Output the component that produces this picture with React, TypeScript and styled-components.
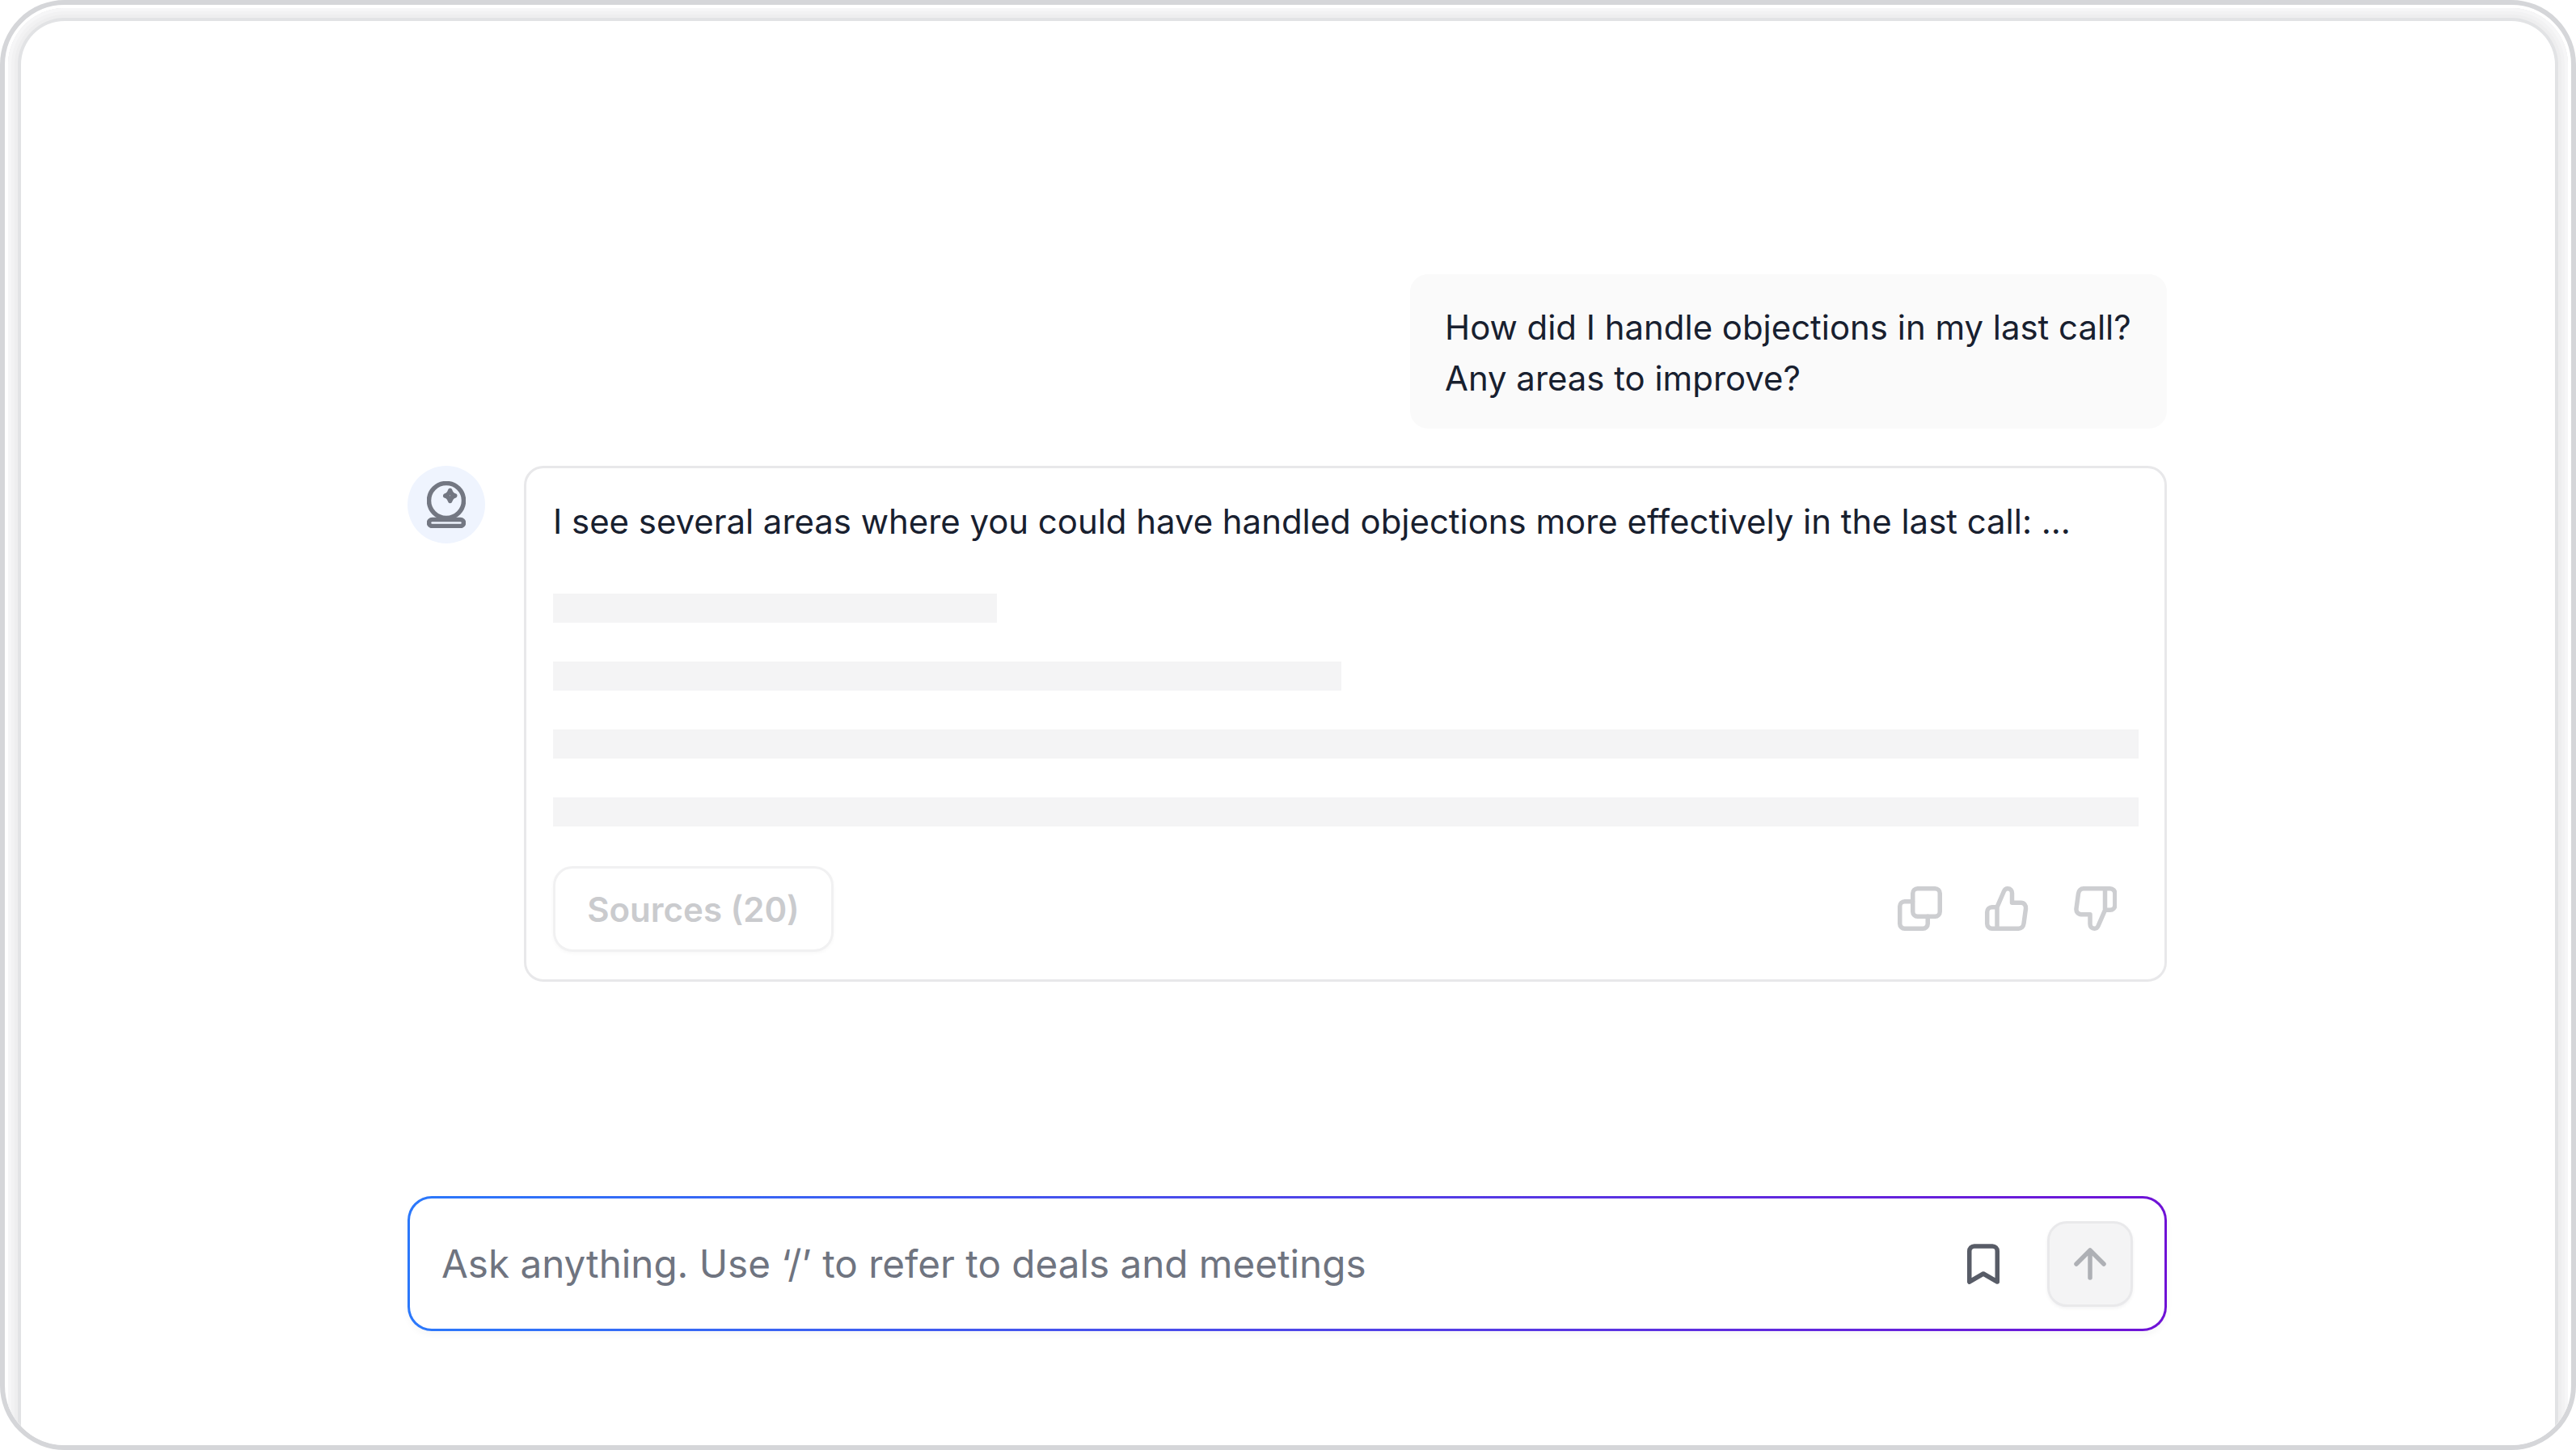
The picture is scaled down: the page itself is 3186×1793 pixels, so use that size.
import React from 'react';
import styled, { createGlobalStyle } from 'styled-components';

const GlobalStyle = createGlobalStyle`
  html, body {
    margin: 0;
    padding: 0;
    background: #fff;
  }

  body {
    font-family: Inter, 'Liberation Sans', sans-serif;
  }
`;

const Frame = styled.div`
  box-sizing: border-box;
  width: 3186px;
  height: 1793px;
  border: 6px solid #d5d6d9;
  border-radius: 80px;
  padding: 4px 4px 0;
  overflow: hidden;
  background: #fff;
`;

/* runs 60px past the bottom of the frame so the bezel has no bottom edge */
const Screen = styled.main`
  box-sizing: border-box;
  height: calc(100% + 60px);
  border-radius: 70px;
  padding: 329px 496px 201px 494px;
  display: flex;
  flex-direction: column;
  background: #fff;
  box-shadow: inset 0 0 0 4px #f6f6f7, inset 0 0 0 8px #f2f2f3, inset 0 0 0 12px #eeeeef,
    inset 0 0 0 16px #e2e3e5;
`;

const UserBubble = styled.div`
  align-self: flex-end;
  box-sizing: border-box;
  width: 936px;
  height: 191px;
  padding: 34px 43px;
  background: #fafafa;
  border-radius: 22px;
  font-size: 41.9px;
  line-height: 63px;
  color: #18202f;
  white-space: nowrap;
`;

const AnswerRow = styled.section`
  display: flex;
  align-items: flex-start;
  gap: 48px;
  margin-top: 46px;
`;

const Avatar = styled.div`
  flex: none;
  width: 96px;
  height: 96px;
  border-radius: 50%;
  background: #eff4fe;
  display: flex;
  align-items: center;
  justify-content: center;
`;

const AnswerCard = styled.article`
  box-sizing: border-box;
  flex: 1;
  height: 638px;
  border: 3px solid #e8e8ea;
  border-radius: 24px;
  padding: 35px 32px 0 33px;
`;

const AnswerText = styled.p`
  margin: 0;
  font-size: 41.9px;
  line-height: 62px;
  color: #18202f;
  white-space: nowrap;
`;

const Skeletons = styled.div`
  display: flex;
  flex-direction: column;
  gap: 48px;
  margin-top: 58px;
`;

const Skeleton = styled.div<{ $width: string }>`
  height: 36px;
  width: ${(p) => p.$width};
  background: #f4f4f5;
`;

const CardFooter = styled.div`
  display: flex;
  align-items: center;
  justify-content: space-between;
  margin-top: 49px;
`;

const SourcesButton = styled.button`
  box-sizing: border-box;
  width: 347px;
  height: 106px;
  border: 3px solid #f1f1f2;
  border-radius: 24px;
  background: #fff;
  box-shadow: 0 2px 4px rgba(16, 24, 40, 0.03);
  font-family: inherit;
  font-size: 42px;
  font-weight: 600;
  color: #cacbce;
  padding: 0;
`;

const CardActions = styled.div`
  display: flex;
  gap: 52px;
  margin-right: 27px;
`;

const Spacer = styled.div`
  flex: 1;
`;

const InputBar = styled.div`
  box-sizing: border-box;
  flex: none;
  height: 167px;
  border: 3px solid transparent;
  border-radius: 30px;
  background: linear-gradient(#fff, #fff) padding-box,
    linear-gradient(90deg, #2b78fb, #6f12d6) border-box;
  box-shadow: 0 4px 8px rgba(16, 24, 40, 0.04);
  display: flex;
  align-items: center;
  padding: 0 39px;
`;

const Placeholder = styled.span`
  flex: 1;
  font-size: 47.6px;
  color: #6f7480;
`;

const SendButton = styled.button`
  box-sizing: border-box;
  width: 106px;
  height: 106px;
  margin-left: 59px;
  border: 3px solid #e9e9eb;
  border-radius: 24px;
  background: #f4f4f5;
  box-shadow: 0 2px 4px rgba(16, 24, 40, 0.05);
  display: flex;
  align-items: center;
  justify-content: center;
  padding: 0;
`;

const IconSvg = styled.svg`
  display: block;
  flex: none;
  fill: none;
  stroke-width: 5.5;
  stroke-linecap: round;
  stroke-linejoin: round;
`;

const ActionIcon = styled(IconSvg).attrs({ width: 56, height: 56, viewBox: '0 0 56 56' })`
  stroke: #cdced1;
`;

const THUMB =
  'M16 25.7L24.5 6C25.5 3.8 27 2.8 29 2.8C32.5 2.800 34.500 5 34.500 8.500V20.300H45.500C49.500 20.300 52 23.500 51.500 27.500L49 46C48.500 49.700 46 52.200 42.500 52.200H9.700A6 6 0 0 1 3.700 46.200V31.700A6 6 0 0 1 9.700 25.700H16V52.200';

const CrystalBallIcon = () => (
  <IconSvg width="48" height="58" viewBox="0 0 48 58" stroke="#737782">
    <circle cx="24" cy="24" r="21.5" />
    <rect x="2.5" y="47.500" width="43" height="8" rx="4" />
    <path d="M28.700 11.500c.9 3 2.600 5.600 6 6.500-3.400.9-5.100 3.500-6 6.500-.9-3-2.600-5.600-6-6.500 3.400-.9 5.100-3.500 6-6.500z" />
  </IconSvg>
);

const CopyIcon = () => (
  <ActionIcon>
    <rect x="19.750" y="2.750" width="33.500" height="34.500" rx="6" />
    <path d="M19.500 18.750H9.750a6 6 0 0 0-6 6V46.250a6 6 0 0 0 6 6H32.250a6 6 0 0 0 6-6V37.250" />
  </ActionIcon>
);

const ThumbUpIcon = () => (
  <ActionIcon>
    <path d={THUMB} />
  </ActionIcon>
);

const ThumbDownIcon = () => (
  <ActionIcon>
    <path d={THUMB} transform="rotate(180 28.750 27.500)" />
  </ActionIcon>
);

const BookmarkIcon = () => (
  <IconSvg width="40" height="50" viewBox="0 0 40 50" stroke="#585c67">
    <path d="M2.750 47V9a6 6 0 0 1 6-6h22.500a6 6 0 0 1 6 6v38L20 37z" />
  </IconSvg>
);

const ArrowUpIcon = () => (
  <IconSvg width="40" height="40" viewBox="0 0 40 40" stroke="#aeb0b5">
    <path d="M20 37V3M3 20L20 3l17 17" />
  </IconSvg>
);

const App = () => {
  return (
    <>
      <GlobalStyle />
      <Frame>
        <Screen>
          <UserBubble>
            How did I handle objections in my last call?
            <br />
            Any areas to improve?
          </UserBubble>
          <AnswerRow>
            <Avatar>
              <CrystalBallIcon />
            </Avatar>
            <AnswerCard>
              <AnswerText>
                I see several areas where you could have handled objections more effectively in the last call: ...
              </AnswerText>
              <Skeletons>
                <Skeleton $width="549px" />
                <Skeleton $width="975px" />
                <Skeleton $width="100%" />
                <Skeleton $width="100%" />
              </Skeletons>
              <CardFooter>
                <SourcesButton>Sources (20)</SourcesButton>
                <CardActions>
                  <CopyIcon />
                  <ThumbUpIcon />
                  <ThumbDownIcon />
                </CardActions>
              </CardFooter>
            </AnswerCard>
          </AnswerRow>
          <Spacer />
          <InputBar>
            <Placeholder>Ask anything. Use ‘/’ to refer to deals and meetings</Placeholder>
            <BookmarkIcon />
            <SendButton>
              <ArrowUpIcon />
            </SendButton>
          </InputBar>
        </Screen>
      </Frame>
    </>
  );
};

export default App;
